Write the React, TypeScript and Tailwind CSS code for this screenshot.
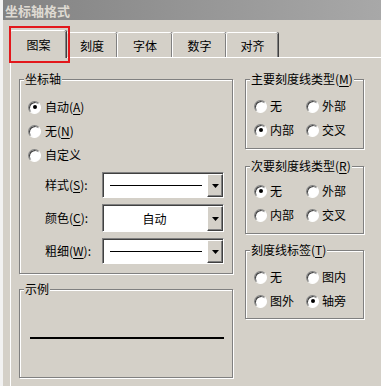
import type { ReactNode } from "react";

const FONT = { fontFamily: '"Noto Sans CJK SC", "Noto Sans", sans-serif' };

const TABS = [
  { label: "图案", w: "w-[56px]", active: true },
  { label: "刻度", w: "w-[51px]", active: false },
  { label: "字体", w: "w-[55px]", active: false },
  { label: "数字", w: "w-[54px]", active: false },
  { label: "对齐", w: "w-[52px]", active: false },
];

function Radio({ checked }: { checked?: boolean }) {
  return (
    <span className="relative flex h-[13px] w-[13px] shrink-0 items-center justify-center rounded-full border border-t-[#808080] border-l-[#808080] border-b-white border-r-white bg-white shadow-[inset_1px_1px_0_#404040]">
      {checked && <span className="h-[4px] w-[4px] rounded-full bg-black" />}
    </span>
  );
}

function Mn({ children }: { children: ReactNode }) {
  return <span className="underline underline-offset-2">{children}</span>;
}

function Group({
  label,
  className,
  children,
}: {
  label: ReactNode;
  className: string;
  children?: ReactNode;
}) {
  return (
    <div
      className={`relative border border-[#808080] shadow-[inset_1px_1px_0_#fff,1px_1px_0_#fff] ${className}`}
    >
      <span className="absolute -top-[8px] left-[4px] bg-[#d4d0c8] px-[1px] text-[12px] leading-[14px] text-black">
        {label}
      </span>
      {children}
    </div>
  );
}

function Combo({ h, children }: { h: string; children: ReactNode }) {
  return (
    <div
      className={`flex ${h} w-[122px] border border-t-[#808080] border-l-[#808080] border-b-white border-r-white bg-white shadow-[inset_1px_1px_0_#404040]`}
    >
      <div className="flex flex-1 items-center pl-[7px] pt-[1px]">{children}</div>
      <div className="mt-[1px] flex w-[16px] items-center justify-center border border-t-white border-l-white border-b-[#404040] border-r-[#404040] bg-[#d4d0c8] shadow-[inset_-1px_-1px_0_#808080]">
        <svg width="7" height="4" viewBox="0 0 7 4">
          <polygon points="0,0 7,0 3.5,4" fill="#000" />
        </svg>
      </div>
    </div>
  );
}

function RadioPair({
  items,
}: {
  items: { label: string; checked?: boolean }[];
}) {
  return (
    <div className="flex h-[24px] items-center pl-[8px]">
      {items.map((it, i) => (
        <div
          key={it.label}
          className={`flex items-center gap-[3px] ${i === 0 ? "w-[52px]" : ""}`}
        >
          <Radio checked={it.checked} />
          <span className="text-[12px] leading-[14px]">{it.label}</span>
        </div>
      ))}
    </div>
  );
}

export default function App() {
  return (
    <div
      className="flex h-[386px] w-[381px] flex-col overflow-hidden border-l-[3px] border-[#f2f2f2] bg-[#d4d0c8] text-black"
      style={FONT}
    >
      <div className="h-[20px] shrink-0 bg-gradient-to-r from-[#838383] to-[#a8a8a8] pl-[2px] text-[13px] font-bold leading-[21px] text-[#dedad2]">
        坐标轴格式
      </div>

      <div className="flex h-[37px] shrink-0 items-end pl-[7px]">
        {TABS.map((t) =>
          t.active ? (
            <div
              key={t.label}
              className={`relative z-10 -mb-px flex h-[28px] ${t.w} items-center justify-center rounded-t-[2px] border-t border-l border-white bg-[#d4d0c8] pt-[1px] text-[12px] shadow-[inset_-1px_0_0_#808080,1px_0_0_#404040]`}
            >
              {t.label}
              <span className="absolute -top-[5px] -left-[2px] h-[37px] w-[61px] border-2 border-[#e3171b]" />
            </div>
          ) : (
            <div
              key={t.label}
              className={`flex h-[25px] ${t.w} items-center justify-center rounded-t-[2px] border-t border-l border-white bg-[#d4d0c8] pt-[2px] text-[12px] shadow-[inset_-1px_0_0_#808080,1px_0_0_#404040]`}
            >
              {t.label}
            </div>
          )
        )}
      </div>

      <div className="ml-[7px] flex flex-1 border-t border-l border-white pl-[8px] pt-[21px]">
        <div className="flex w-[214px] flex-col">
          <Group label="坐标轴" className="h-[195px] pt-[15px]">
            <div className="flex h-[24px] items-center gap-[4px] pl-[8px]">
              <Radio checked />
              <span className="text-[12px] leading-[14px]">
                自动(<Mn>A</Mn>)
              </span>
            </div>
            <div className="flex h-[24px] items-center gap-[4px] pl-[8px]">
              <Radio />
              <span className="text-[12px] leading-[14px]">
                无(<Mn>N</Mn>)
              </span>
            </div>
            <div className="flex h-[24px] items-center gap-[4px] pl-[8px]">
              <Radio />
              <span className="text-[12px] leading-[14px]">自定义</span>
            </div>

            <div className="mt-[5px] flex flex-col gap-[6px] pl-[25px]">
              <div className="flex items-center">
                <span className="w-[57px] text-[12px] leading-[14px]">
                  样式(<Mn>S</Mn>):
                </span>
                <Combo h="h-[26px]">
                  <div className="h-px w-[92px] bg-black" />
                </Combo>
              </div>
              <div className="flex items-center">
                <span className="w-[57px] text-[12px] leading-[14px]">
                  颜色(<Mn>C</Mn>):
                </span>
                <Combo h="h-[28px]">
                  <div className="w-full pr-[8px] text-center text-[12px] leading-[14px]">
                    自动
                  </div>
                </Combo>
              </div>
              <div className="flex items-center">
                <span className="w-[57px] text-[12px] leading-[14px]">
                  粗细(<Mn>W</Mn>):
                </span>
                <Combo h="h-[26px]">
                  <div className="h-px w-[92px] bg-black" />
                </Combo>
              </div>
            </div>
          </Group>

          <Group label="示例" className="mt-[15px] h-[89px] pt-[47px]">
            <div className="ml-[10px] h-[2px] w-[194px] bg-black" />
          </Group>
        </div>

        <div className="ml-[12px] flex w-[119px] flex-col">
          <Group
            label={
              <>
                主要刻度线类型(<Mn>M</Mn>)
              </>
            }
            className="h-[70px] pt-[14px]"
          >
            <RadioPair items={[{ label: "无" }, { label: "外部" }]} />
            <RadioPair items={[{ label: "内部", checked: true }, { label: "交叉" }]} />
          </Group>

          <Group
            label={
              <>
                次要刻度线类型(<Mn>R</Mn>)
              </>
            }
            className="mt-[17px] h-[68px] pt-[12px]"
          >
            <RadioPair items={[{ label: "无", checked: true }, { label: "外部" }]} />
            <RadioPair items={[{ label: "内部" }, { label: "交叉" }]} />
          </Group>

          <Group
            label={
              <>
                刻度线标签(<Mn>T</Mn>)
              </>
            }
            className="mt-[16px] h-[69px] pt-[14px]"
          >
            <RadioPair items={[{ label: "无" }, { label: "图内" }]} />
            <RadioPair items={[{ label: "图外" }, { label: "轴旁", checked: true }]} />
          </Group>
        </div>
      </div>
    </div>
  );
}
